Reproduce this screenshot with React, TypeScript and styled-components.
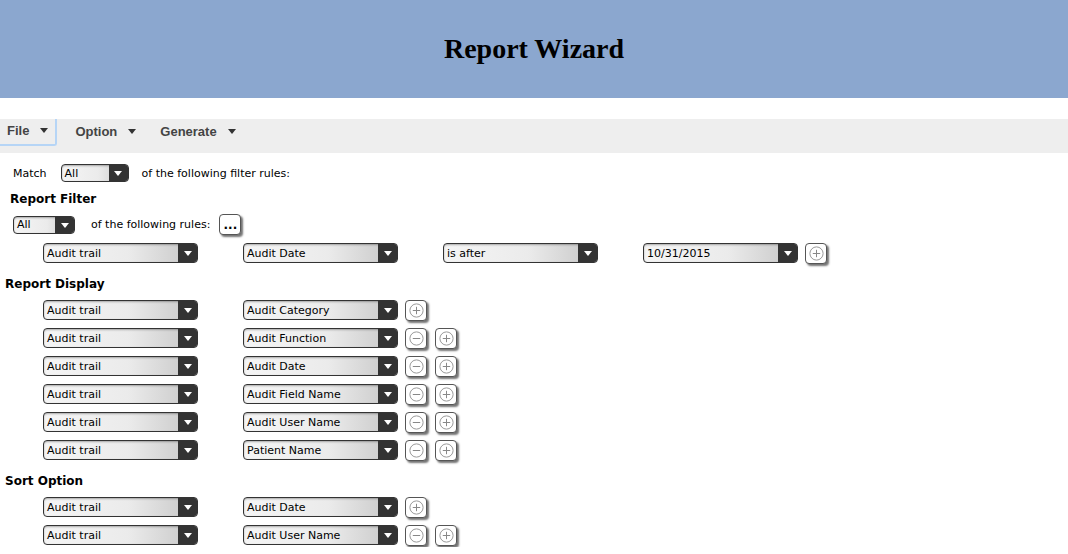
import React from "react";
import styled, { createGlobalStyle } from "styled-components";

const GlobalStyle = createGlobalStyle`
    body {
        margin: 0;
        background: #fff;
        color: #000;
        font-family: "DejaVu Sans", Verdana, sans-serif;
        font-size: 11px;
    }
`;

const Header = styled.header`
    height: 98px;
    background: #8ba7cf;
    display: flex;
    align-items: center;
    justify-content: center;

    h1 {
        margin: 0;
        font-family: "Liberation Serif", "Times New Roman", serif;
        font-size: 28px;
        font-weight: bold;
    }
`;

const MenuBar = styled.nav`
    margin-top: 21px;
    height: 34px;
    background: #eeeeee;
    display: flex;
    align-items: flex-start;
    gap: 12px;
`;

const MenuItem = styled.div<{ $focus?: boolean }>`
    height: 27px;
    box-sizing: border-box;
    display: flex;
    align-items: center;
    gap: 11px;
    padding: 0 ${(p) => (p.$focus ? "7px" : "6px")} 2px;
    font-family: "Liberation Sans", Arial, sans-serif;
    font-weight: bold;
    font-size: 13px;
    color: #444;
    border-right: ${(p) => (p.$focus ? "2px solid #b6d5f6" : "none")};
    border-bottom: ${(p) => (p.$focus ? "2px solid #b6d5f6" : "none")};
    border-bottom-right-radius: 3px;
`;

const Caret = styled.span`
    width: 0;
    height: 0;
    border-left: 4px solid transparent;
    border-right: 4px solid transparent;
    border-top: 5px solid #333;
`;

const Line = styled.div<{ $top: number; $left: number }>`
    display: flex;
    align-items: center;
    margin-top: ${(p) => p.$top}px;
    padding-left: ${(p) => p.$left}px;
`;

const Label = styled.span<{ $before?: number; $after?: number }>`
    margin-left: ${(p) => p.$before ?? 0}px;
    margin-right: ${(p) => p.$after ?? 0}px;
    white-space: nowrap;
`;

const Heading = styled.div<{ $top: number; $left: number }>`
    margin-top: ${(p) => p.$top}px;
    padding-left: ${(p) => p.$left}px;
    height: 16px;
    line-height: 16px;
    font-weight: bold;
    font-size: 12px;
`;

const RuleList = styled.div<{ $top: number }>`
    margin-top: ${(p) => p.$top}px;
    display: flex;
    flex-direction: column;
    gap: 4px;
`;

const RuleRow = styled.div`
    height: 24px;
    display: flex;
    align-items: center;
    padding-left: 43px;
    gap: 45px;
`;

const Buttons = styled.div`
    display: flex;
    gap: 8px;
    margin-left: -38px;
`;

const SelectBox = styled.div<{ $w: number; $h: number }>`
    width: ${(p) => p.$w}px;
    height: ${(p) => p.$h}px;
    box-sizing: border-box;
    flex: none;
    display: flex;
    border: 1px solid #333;
    border-radius: 4px;
    overflow: hidden;
    background: linear-gradient(to right, #f5f5f5 0%, #ebebeb 55%, #c6c6c6 100%);
    box-shadow: inset 0 1px 2px rgba(0, 0, 0, 0.3);
`;

const SelectText = styled.span`
    flex: 1;
    padding-left: 3px;
    display: flex;
    align-items: center;
    white-space: nowrap;
    overflow: hidden;
`;

const SelectArrow = styled.span`
    width: 19px;
    background: #333;
    display: flex;
    align-items: center;
    justify-content: center;

    &::after {
        content: "";
        border-left: 4px solid transparent;
        border-right: 4px solid transparent;
        border-top: 5px solid #fff;
        margin-top: 1px;
    }
`;

const IconButton = styled.button`
    width: 22px;
    height: 21px;
    padding: 0;
    flex: none;
    display: flex;
    align-items: center;
    justify-content: center;
    background: #fff;
    border: 1px solid #555;
    border-radius: 4px;
    box-shadow: 2px 2px 2px rgba(0, 0, 0, 0.55);
    font-family: "DejaVu Sans", Verdana, sans-serif;
    font-weight: bold;
    font-size: 12px;
    line-height: 1;
    color: #000;
`;

function Select({ value, w = 155, h = 20 }: { value: string; w?: number; h?: number }) {
    return (
        <SelectBox $w={w} $h={h}>
            <SelectText>{value}</SelectText>
            <SelectArrow />
        </SelectBox>
    );
}

function RoundIcon({ plus }: { plus: boolean }) {
    return (
        <svg width="15" height="15" viewBox="0 0 15 15">
            <circle cx="7.5" cy="7.5" r="6.6" fill="none" stroke="#9a9a9a" strokeWidth="1" />
            <line x1="3.8" y1="7.5" x2="11.2" y2="7.5" stroke="#888" strokeWidth="1" />
            {plus && <line x1="7.5" y1="3.8" x2="7.5" y2="11.2" stroke="#888" strokeWidth="1" />}
        </svg>
    );
}

function Rule({ field, removable }: { field: string; removable: boolean }) {
    return (
        <RuleRow>
            <Select value="Audit trail" />
            <Select value={field} />
            <Buttons>
                {removable && <IconButton><RoundIcon plus={false} /></IconButton>}
                <IconButton><RoundIcon plus /></IconButton>
            </Buttons>
        </RuleRow>
    );
}

const displayFields = [
    "Audit Category",
    "Audit Function",
    "Audit Date",
    "Audit Field Name",
    "Audit User Name",
    "Patient Name",
];

const sortFields = ["Audit Date", "Audit User Name"];

export default function App() {
    return (
        <>
            <GlobalStyle />
            <Header>
                <h1>Report Wizard</h1>
            </Header>
            <MenuBar>
                <MenuItem $focus>File <Caret /></MenuItem>
                <MenuItem>Option <Caret /></MenuItem>
                <MenuItem>Generate <Caret /></MenuItem>
            </MenuBar>

            <Line $top={11} $left={13}>
                <Label $after={14}>Match</Label>
                <Select value="All" w={68} h={18} />
                <Label $before={13}>of the following filter rules:</Label>
            </Line>

            <Heading $top={9} $left={10}>Report Filter</Heading>
            <Line $top={7} $left={13}>
                <Select value="All" w={62} h={18} />
                <Label $before={16} $after={9}>of the following rules:</Label>
                <IconButton>...</IconButton>
            </Line>
            <RuleList $top={6}>
                <RuleRow>
                    <Select value="Audit trail" />
                    <Select value="Audit Date" />
                    <Select value="is after" />
                    <Select value="10/31/2015" />
                    <Buttons>
                        <IconButton><RoundIcon plus /></IconButton>
                    </Buttons>
                </RuleRow>
            </RuleList>

            <Heading $top={11} $left={5}>Report Display</Heading>
            <RuleList $top={6}>
                {displayFields.map((f, i) => (
                    <Rule key={f} field={f} removable={i > 0} />
                ))}
            </RuleList>

            <Heading $top={11} $left={5}>Sort Option</Heading>
            <RuleList $top={6}>
                {sortFields.map((f, i) => (
                    <Rule key={f} field={f} removable={i > 0} />
                ))}
            </RuleList>
        </>
    );
}
